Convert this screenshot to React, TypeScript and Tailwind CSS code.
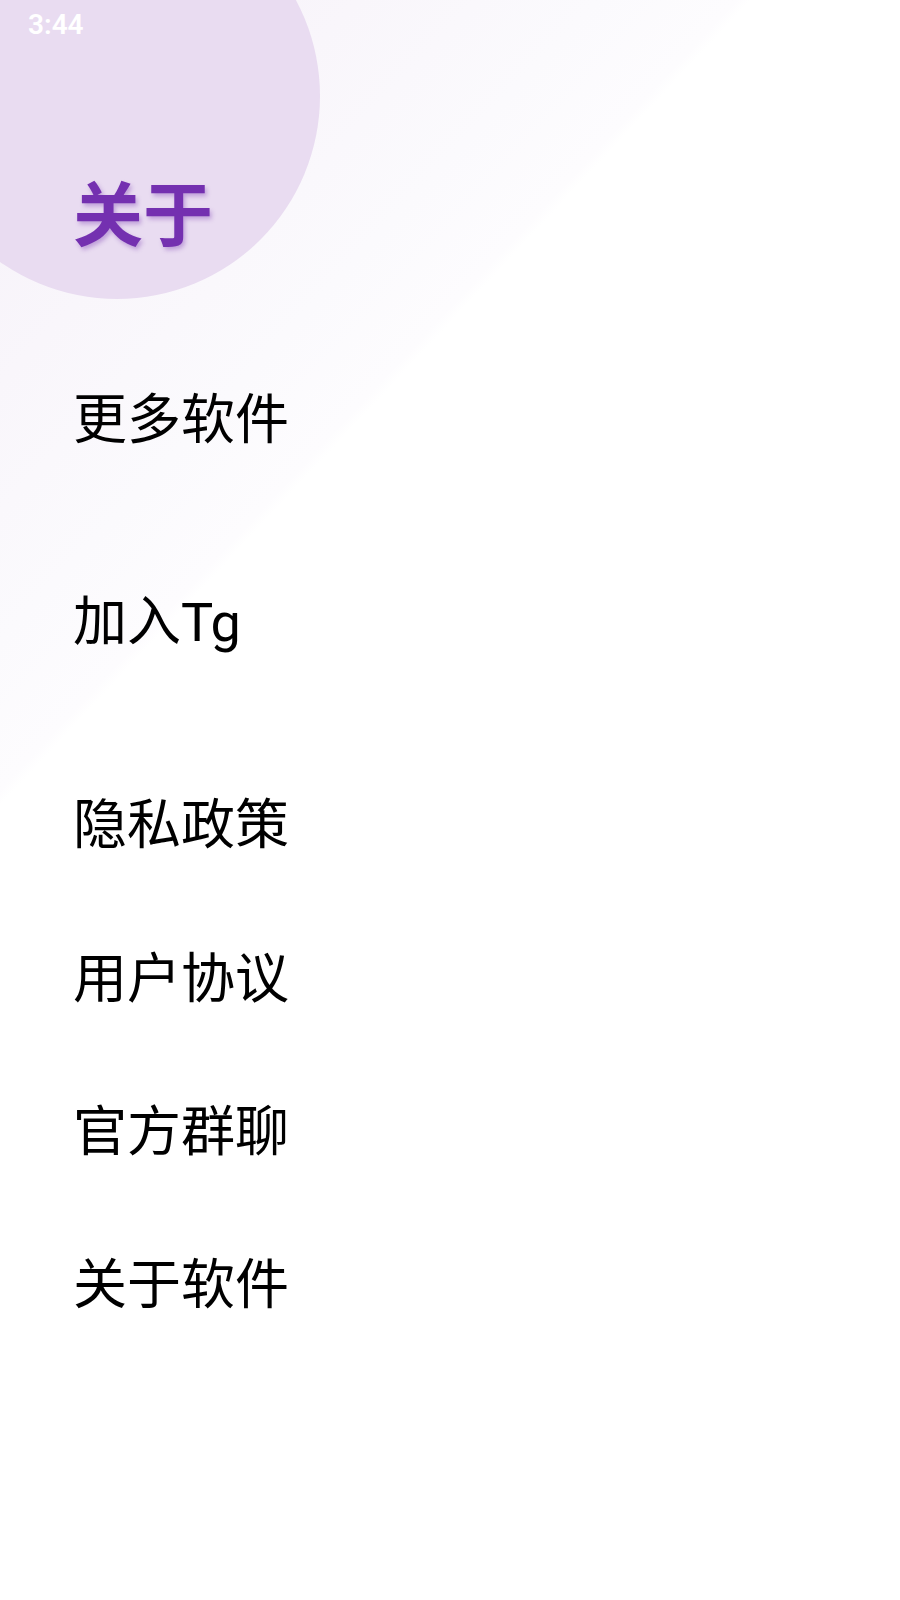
import React from "react";

const font = { fontFamily: 'Roboto, "Noto Sans CJK SC", sans-serif' };

const items = [
  { label: "更多软件", gap: "" },
  { label: "加入Tg", gap: "mt-[148px]" },
  { label: "隐私政策", gap: "mt-[149px]" },
  { label: "用户协议", gap: "mt-[100px]" },
  { label: "官方群聊", gap: "mt-[99px]" },
  { label: "关于软件", gap: "mt-[99px]" },
];

export default function App() {
  return (
    <div
      className="relative min-h-[1600px] w-full overflow-hidden bg-[linear-gradient(133deg,#f5f1f9_0%,#f9f6fb_15%,#fbfafd_25%,#fdfcfe_30.8%,#ffffff_31.4%,#ffffff_100%)]"
      style={font}
    >
      {/* decorative circle behind the header */}
      <div className="absolute left-[-86px] top-[-107px] h-[406px] w-[406px] rounded-full bg-[#e9dcf1]" />

      <div className="relative">
        {/* status bar */}
        <div className="h-[50px] px-7 pt-[11px] text-[28px] font-semibold leading-none text-white">
          3:44
        </div>

        {/* header */}
        <h1 className="mt-[132px] pl-[73px] text-[70px] font-bold leading-none text-[#7430b0] [text-shadow:2px_3px_4px_rgba(116,48,176,0.35)]">
          关于
        </h1>

        {/* menu */}
        <ul className="mt-[142px] flex flex-col pl-[73px]">
          {items.map(({ label, gap }) => (
            <li
              key={label}
              className={`${gap} text-[54px] leading-none text-black`}
            >
              {label}
            </li>
          ))}
        </ul>
      </div>
    </div>
  );
}
